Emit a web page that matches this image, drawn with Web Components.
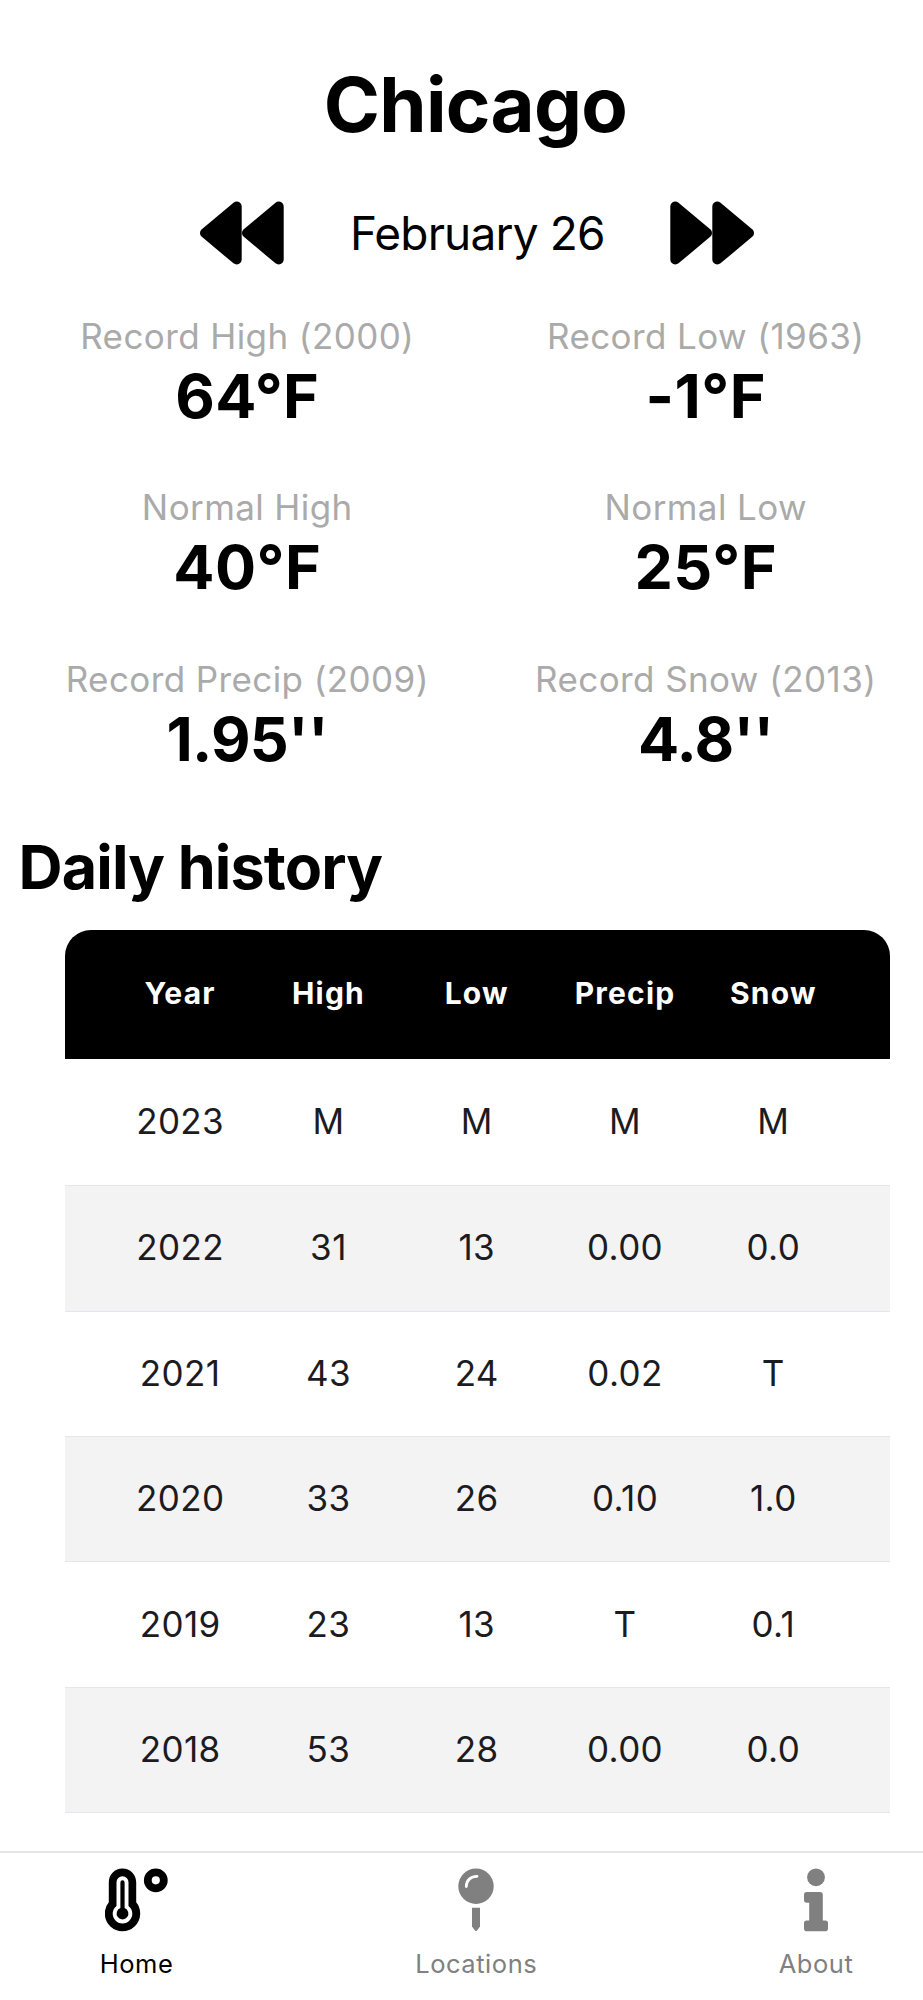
<!DOCTYPE html>
<html lang="en">
<head>
  <meta charset="utf-8">
  <title>Chicago</title>
  <style>
    body {
      margin: 0;
      background-color: #fff;
      color: #000;
      font-family: Inter, "Liberation Sans", sans-serif;
    }
  </style>
</head>
<body>
  <weather-app>
    <city-title>Chicago</city-title>
    <date-nav>February 26</date-nav>
    <stats-grid>
      <stat-item label="Record High (2000)">64°F</stat-item>
      <stat-item label="Record Low (1963)">-1°F</stat-item>
      <stat-item label="Normal High">40°F</stat-item>
      <stat-item label="Normal Low">25°F</stat-item>
      <stat-item label="Record Precip (2009)" class="inches">1.95''</stat-item>
      <stat-item label="Record Snow (2013)" class="inches">4.8''</stat-item>
    </stats-grid>
    <section-title>Daily history</section-title>
    <history-table></history-table>
    <tab-bar slot="footer">
      <tab-item icon="home" active>Home</tab-item>
      <tab-item icon="locations">Locations</tab-item>
      <tab-item icon="about">About</tab-item>
    </tab-bar>
  </weather-app>

  <script>
    class WeatherApp extends HTMLElement {
      constructor() {
        super();
        const shadow = this.attachShadow({ mode: 'open' });
        shadow.innerHTML = `
          <style>
            :host {
              display: flex;
              flex-direction: column;
              height: 2000px;
              overflow: hidden;
            }
            main {
              flex: 1;
              min-height: 0;
              padding-top: 54px;
            }
          </style>
          <main><slot></slot></main>
          <slot name="footer"></slot>
        `;
      }
    }

    class CityTitle extends HTMLElement {
      constructor() {
        super();
        const shadow = this.attachShadow({ mode: 'open' });
        shadow.innerHTML = `
          <style>
            :host { display: block; padding-left: 28px; }
            h1 {
              margin: 0;
              font-size: 76px;
              font-weight: 700;
              line-height: 100px;
              letter-spacing: -0.7px;
              text-align: center;
            }
          </style>
          <h1><slot></slot></h1>
        `;
      }
    }

    class DateNav extends HTMLElement {
      constructor() {
        super();
        const shadow = this.attachShadow({ mode: 'open' });
        shadow.innerHTML = `
          <style>
            :host {
              display: flex;
              justify-content: space-between;
              align-items: center;
              margin-top: 46.5px;
              padding: 0 169px 0 199.5px;
            }
            button {
              display: block;
              padding: 0;
              border: none;
              background: none;
              color: inherit;
            }
            svg {
              display: block;
              fill: currentColor;
              stroke: currentColor;
              stroke-width: 10;
              stroke-linejoin: round;
            }
            span {
              padding-left: 1px;
              font-size: 46px;
              line-height: 62px;
              letter-spacing: -0.85px;
              white-space: nowrap;
            }
          </style>
          <button aria-label="Previous day">
            <svg width="84" height="64" viewBox="0 0 84 64">
              <path d="M5 32 36.7 5.5V58.5ZM47 32 78.7 5.5V58.5Z"/>
            </svg>
          </button>
          <span><slot></slot></span>
          <button aria-label="Next day">
            <svg width="84" height="64" viewBox="0 0 84 64">
              <path d="M79 32 47.3 5.5V58.5ZM37 32 5.3 5.5V58.5Z"/>
            </svg>
          </button>
        `;
      }
    }

    class StatsGrid extends HTMLElement {
      constructor() {
        super();
        const shadow = this.attachShadow({ mode: 'open' });
        shadow.innerHTML = `
          <style>
            :host {
              display: grid;
              grid-template-columns: 1fr 1fr;
              gap: 51.6px 24px;
              margin-top: 47px;
              padding-left: 30px;
            }
          </style>
          <slot></slot>
        `;
      }
    }

    class StatItem extends HTMLElement {
      constructor() {
        super();
        const shadow = this.attachShadow({ mode: 'open' });
        shadow.innerHTML = `
          <style>
            :host { display: block; text-align: center; }
            .label {
              font-size: 35px;
              line-height: 48px;
              letter-spacing: 0.4px;
              color: #aaa;
              white-space: nowrap;
            }
            .value {
              font-size: 61px;
              font-weight: 700;
              line-height: 72px;
              letter-spacing: 0.4px;
            }
            :host(.inches) .value { letter-spacing: -0.7px; }
          </style>
          <div class="label"></div>
          <div class="value"><slot></slot></div>
        `;
        shadow.querySelector('.label').textContent = this.getAttribute('label');
      }
    }

    class SectionTitle extends HTMLElement {
      constructor() {
        super();
        const shadow = this.attachShadow({ mode: 'open' });
        shadow.innerHTML = `
          <style>
            :host { display: block; margin-top: 52px; padding-left: 18.5px; }
            h2 {
              margin: 0;
              font-size: 61px;
              font-weight: 700;
              line-height: 80px;
              letter-spacing: -0.85px;
            }
          </style>
          <h2><slot></slot></h2>
        `;
      }
    }

    const columns = ['Year', 'High', 'Low', 'Precip', 'Snow'];
    const history = [
      ['2023', 'M', 'M', 'M', 'M'],
      ['2022', '31', '13', '0.00', '0.0'],
      ['2021', '43', '24', '0.02', 'T'],
      ['2020', '33', '26', '0.10', '1.0'],
      ['2019', '23', '13', 'T', '0.1'],
      ['2018', '53', '28', '0.00', '0.0'],
    ];

    class HistoryTable extends HTMLElement {
      constructor() {
        super();
        const shadow = this.attachShadow({ mode: 'open' });
        shadow.innerHTML = `
          <style>
            :host {
              display: block;
              margin: 23.3px 33.5px 0 65px;
            }
            .row {
              display: grid;
              grid-template-columns: repeat(5, 1fr);
              align-items: center;
              box-sizing: border-box;
              height: 125.4px;
              padding: 0 42px 2px 41px;
              border-bottom: 1px solid #e9e4ec;
              font-size: 35px;
              letter-spacing: 0.4px;
              text-align: center;
              color: #1c1b1f;
            }
            .row:nth-child(2) { height: 127.2px; }
            .row:nth-child(odd) { background-color: #f3f3f3; }
            .row.head {
              height: 129px;
              border: none;
              border-radius: 26px 26px 0 0;
              background-color: #000;
              color: #fff;
              font-size: 30px;
              font-weight: 700;
              letter-spacing: 1.2px;
            }
          </style>
          <div class="table">
            <div class="row head">${this.cells(columns)}</div>
            ${history.map((day) => `<div class="row">${this.cells(day)}</div>`).join('')}
          </div>
        `;
      }

      cells(values) {
        return values.map((value) => `<span>${value}</span>`).join('');
      }
    }

    class TabBar extends HTMLElement {
      constructor() {
        super();
        const shadow = this.attachShadow({ mode: 'open' });
        shadow.innerHTML = `
          <style>
            :host {
              display: flex;
              justify-content: space-between;
              box-sizing: border-box;
              height: 149px;
              padding: 14.5px 47px 0 76.5px;
              border-top: 2px solid #e5e5e5;
              background-color: #fff;
            }
          </style>
          <slot></slot>
        `;
      }
    }

    // All icons share a 64x64 box
    const icons = {
      home: `
        <g transform="translate(-0.8 0)">
          <path d="M18.3 0.5C10.7 0.5 4.6 6.6 4.6 14.2V34.3A17.7 17.7 0 1 0 32 34.3V14.2C32 6.6 25.9 0.5 18.3 0.5Z"/>
          <path fill="#fff" d="M18.3 8.2A6 6 0 0 0 12.3 14.2V37.9A9.8 9.8 0 1 0 24.3 37.9V14.2A6 6 0 0 0 18.3 8.2Z"/>
          <path d="M18.3 12.3A2.1 2.1 0 0 0 16.2 14.4V40A5.9 5.9 0 1 0 20.4 40V14.4A2.1 2.1 0 0 0 18.3 12.3Z"/>
          <circle cx="51.6" cy="12.3" r="8" fill="none" stroke="currentColor" stroke-width="7.8"/>
        </g>`,
      locations: `
        <circle cx="32" cy="18.2" r="17.7"/>
        <path d="M22.3 18.6C22.3 12.4 26.7 8.3 33 8.3" fill="none" stroke="#fff" stroke-width="2.8" stroke-linecap="round"/>
        <path d="M28 39.7H36V58.6L33 62.4Q32 63.5 31 62.4L28 58.6Z"/>`,
      about: `
        <circle cx="32" cy="9.3" r="8.9"/>
        <path d="M22.8 24H36Q38.8 24 38.8 26.8V52.4H41.2Q44 52.4 44 55.2V60.4Q44 63.2 41.2 63.2H22.8Q20 63.2 20 60.4V55.2Q20 52.4 22.8 52.4H25.2V34.8H22.8Q20 34.8 20 32V26.8Q20 24 22.8 24Z"/>`,
    };

    class TabItem extends HTMLElement {
      constructor() {
        super();
        const shadow = this.attachShadow({ mode: 'open' });
        shadow.innerHTML = `
          <style>
            :host {
              display: flex;
              flex-direction: column;
              align-items: center;
              width: 120px;
              color: #808080;
            }
            :host([active]) { color: #000; }
            svg { display: block; fill: currentColor; }
            .label {
              margin-top: 17px;
              font-size: 25.5px;
              line-height: 30px;
              letter-spacing: 0.55px;
            }
          </style>
          <svg width="64" height="64" viewBox="0 0 64 64">${icons[this.getAttribute('icon')]}</svg>
          <div class="label"><slot></slot></div>
        `;
      }
    }

    customElements.define('weather-app', WeatherApp);
    customElements.define('city-title', CityTitle);
    customElements.define('date-nav', DateNav);
    customElements.define('stats-grid', StatsGrid);
    customElements.define('stat-item', StatItem);
    customElements.define('section-title', SectionTitle);
    customElements.define('history-table', HistoryTable);
    customElements.define('tab-bar', TabBar);
    customElements.define('tab-item', TabItem);
  </script>
</body>
</html>
